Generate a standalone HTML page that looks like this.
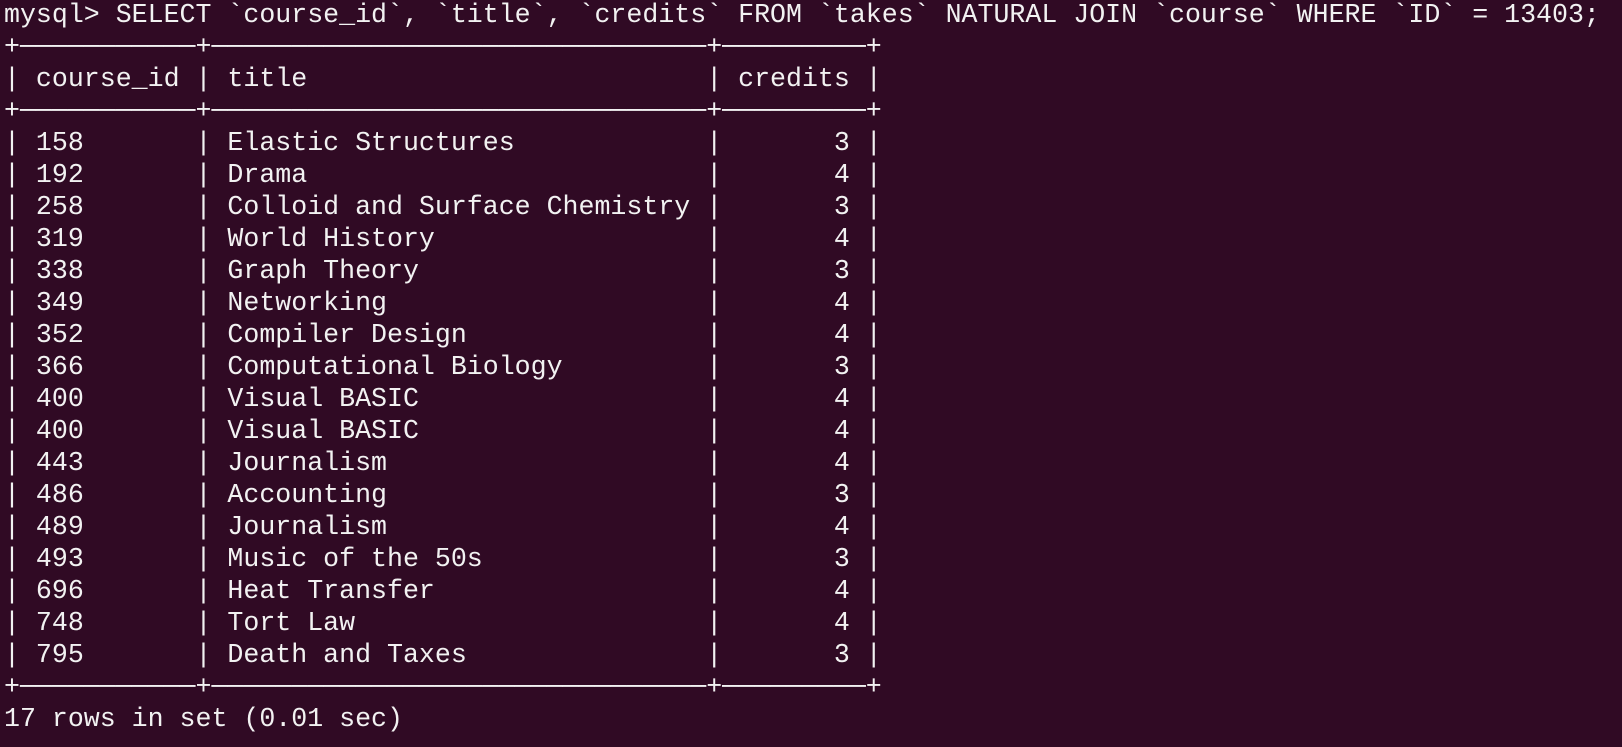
<!DOCTYPE html>
<html><head><meta charset="utf-8"><style>
html,body{margin:0;padding:0;background:#300a24;width:1622px;height:747px;overflow:hidden}
pre{margin:0;position:absolute;left:4px;top:-1px;font-family:"Liberation Mono","DejaVu Sans Mono",monospace;font-size:26.6px;line-height:32px;color:#f2f2f2}
</style></head><body>
<pre>mysql&gt; SELECT `course_id`, `title`, `credits` FROM `takes` NATURAL JOIN `course` WHERE `ID` = 13403;
+───────────+───────────────────────────────+─────────+
| course_id | title                         | credits |
+───────────+───────────────────────────────+─────────+
| 158       | Elastic Structures            |       3 |
| 192       | Drama                         |       4 |
| 258       | Colloid and Surface Chemistry |       3 |
| 319       | World History                 |       4 |
| 338       | Graph Theory                  |       3 |
| 349       | Networking                    |       4 |
| 352       | Compiler Design               |       4 |
| 366       | Computational Biology         |       3 |
| 400       | Visual BASIC                  |       4 |
| 400       | Visual BASIC                  |       4 |
| 443       | Journalism                    |       4 |
| 486       | Accounting                    |       3 |
| 489       | Journalism                    |       4 |
| 493       | Music of the 50s              |       3 |
| 696       | Heat Transfer                 |       4 |
| 748       | Tort Law                      |       4 |
| 795       | Death and Taxes               |       3 |
+───────────+───────────────────────────────+─────────+
17 rows in set (0.01 sec)</pre>
</body></html>
